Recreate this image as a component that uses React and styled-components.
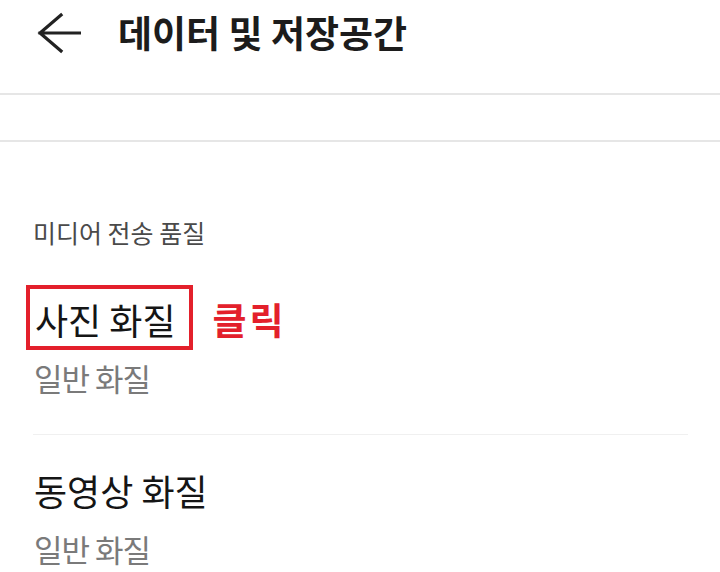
import React from "react";
import styled, { createGlobalStyle } from "styled-components";

const Global = createGlobalStyle`
  html, body { margin: 0; padding: 0; background: #ffffff; }
  body { font-family: "Noto Sans CJK KR", "Noto Sans", sans-serif; }
  * { box-sizing: border-box; }
`;

const Page = styled.div`
  width: 720px;
  height: 572px;
  background: #ffffff;
  overflow: hidden;
`;

const Header = styled.header`
  height: 95px;
  display: flex;
  align-items: flex-start;
  gap: 37px;
  padding: 12px 0 0 37px;
  border-bottom: 2px solid #e6e6e6;
`;

const BackButton = styled.button`
  width: 44px;
  height: 42px;
  padding: 0;
  border: 0;
  background: none;
  display: flex;
  align-items: center;
  justify-content: center;
  color: #222222;
`;

const Title = styled.h1`
  margin: 0;
  font-size: 37px;
  line-height: 40px;
  font-weight: 700;
  color: #1c1c1c;
`;

const Band = styled.div`
  height: 47px;
  border-bottom: 2px solid #e6e6e6;
`;

const Content = styled.main`
  padding: 0 32px 0 33px;
`;

const SectionLabel = styled.div`
  padding-top: 75px;
  margin-bottom: 17px;
  font-size: 25px;
  line-height: 30px;
  color: #4a4a4a;
`;

const Item = styled.div`
  padding: 35px 0 38px;
  border-bottom: ${(p) => (p.$last ? "none" : "1px solid #f0f0f0")};
`;

const TitleRow = styled.div`
  display: flex;
  align-items: center;
  gap: 20px;
`;

const ItemTitle = styled.div`
  font-size: 36px;
  line-height: 40px;
  color: #151515;
  padding-left: 1px;
`;

const Highlight = styled.div`
  border: 4px solid #e3202b;
  padding: 10px 13px 7px 4px;
  margin: -14px 0 -11px -7px;
`;

const ClickNote = styled.span`
  font-size: 37px;
  line-height: 40px;
  font-weight: 700;
  letter-spacing: 3px;
  color: #e3202b;
`;

const ItemValue = styled.div`
  margin-top: 21px;
  font-size: 31px;
  line-height: 36px;
  letter-spacing: -1px;
  color: #7a7a7a;
  padding-left: 1px;
`;

function BackArrow() {
  return (
    <svg width="44" height="42" viewBox="0 0 44 42" fill="none">
      <path
        d="M3 21 H43 M24 3 L3 21 L24 39"
        stroke="currentColor"
        strokeWidth="3.2"
        strokeLinecap="square"
        strokeLinejoin="miter"
      />
    </svg>
  );
}

export default function App() {
  return (
    <Page>
      <Global />
      <Header>
        <BackButton aria-label="뒤로">
          <BackArrow />
        </BackButton>
        <Title>데이터 및 저장공간</Title>
      </Header>
      <Band />
      <Content>
        <SectionLabel>미디어 전송 품질</SectionLabel>
        <Item>
          <TitleRow>
            <Highlight>
              <ItemTitle>사진 화질</ItemTitle>
            </Highlight>
            <ClickNote>클릭</ClickNote>
          </TitleRow>
          <ItemValue>일반 화질</ItemValue>
        </Item>
        <Item $last>
          <TitleRow>
            <ItemTitle>동영상 화질</ItemTitle>
          </TitleRow>
          <ItemValue>일반 화질</ItemValue>
        </Item>
      </Content>
    </Page>
  );
}
